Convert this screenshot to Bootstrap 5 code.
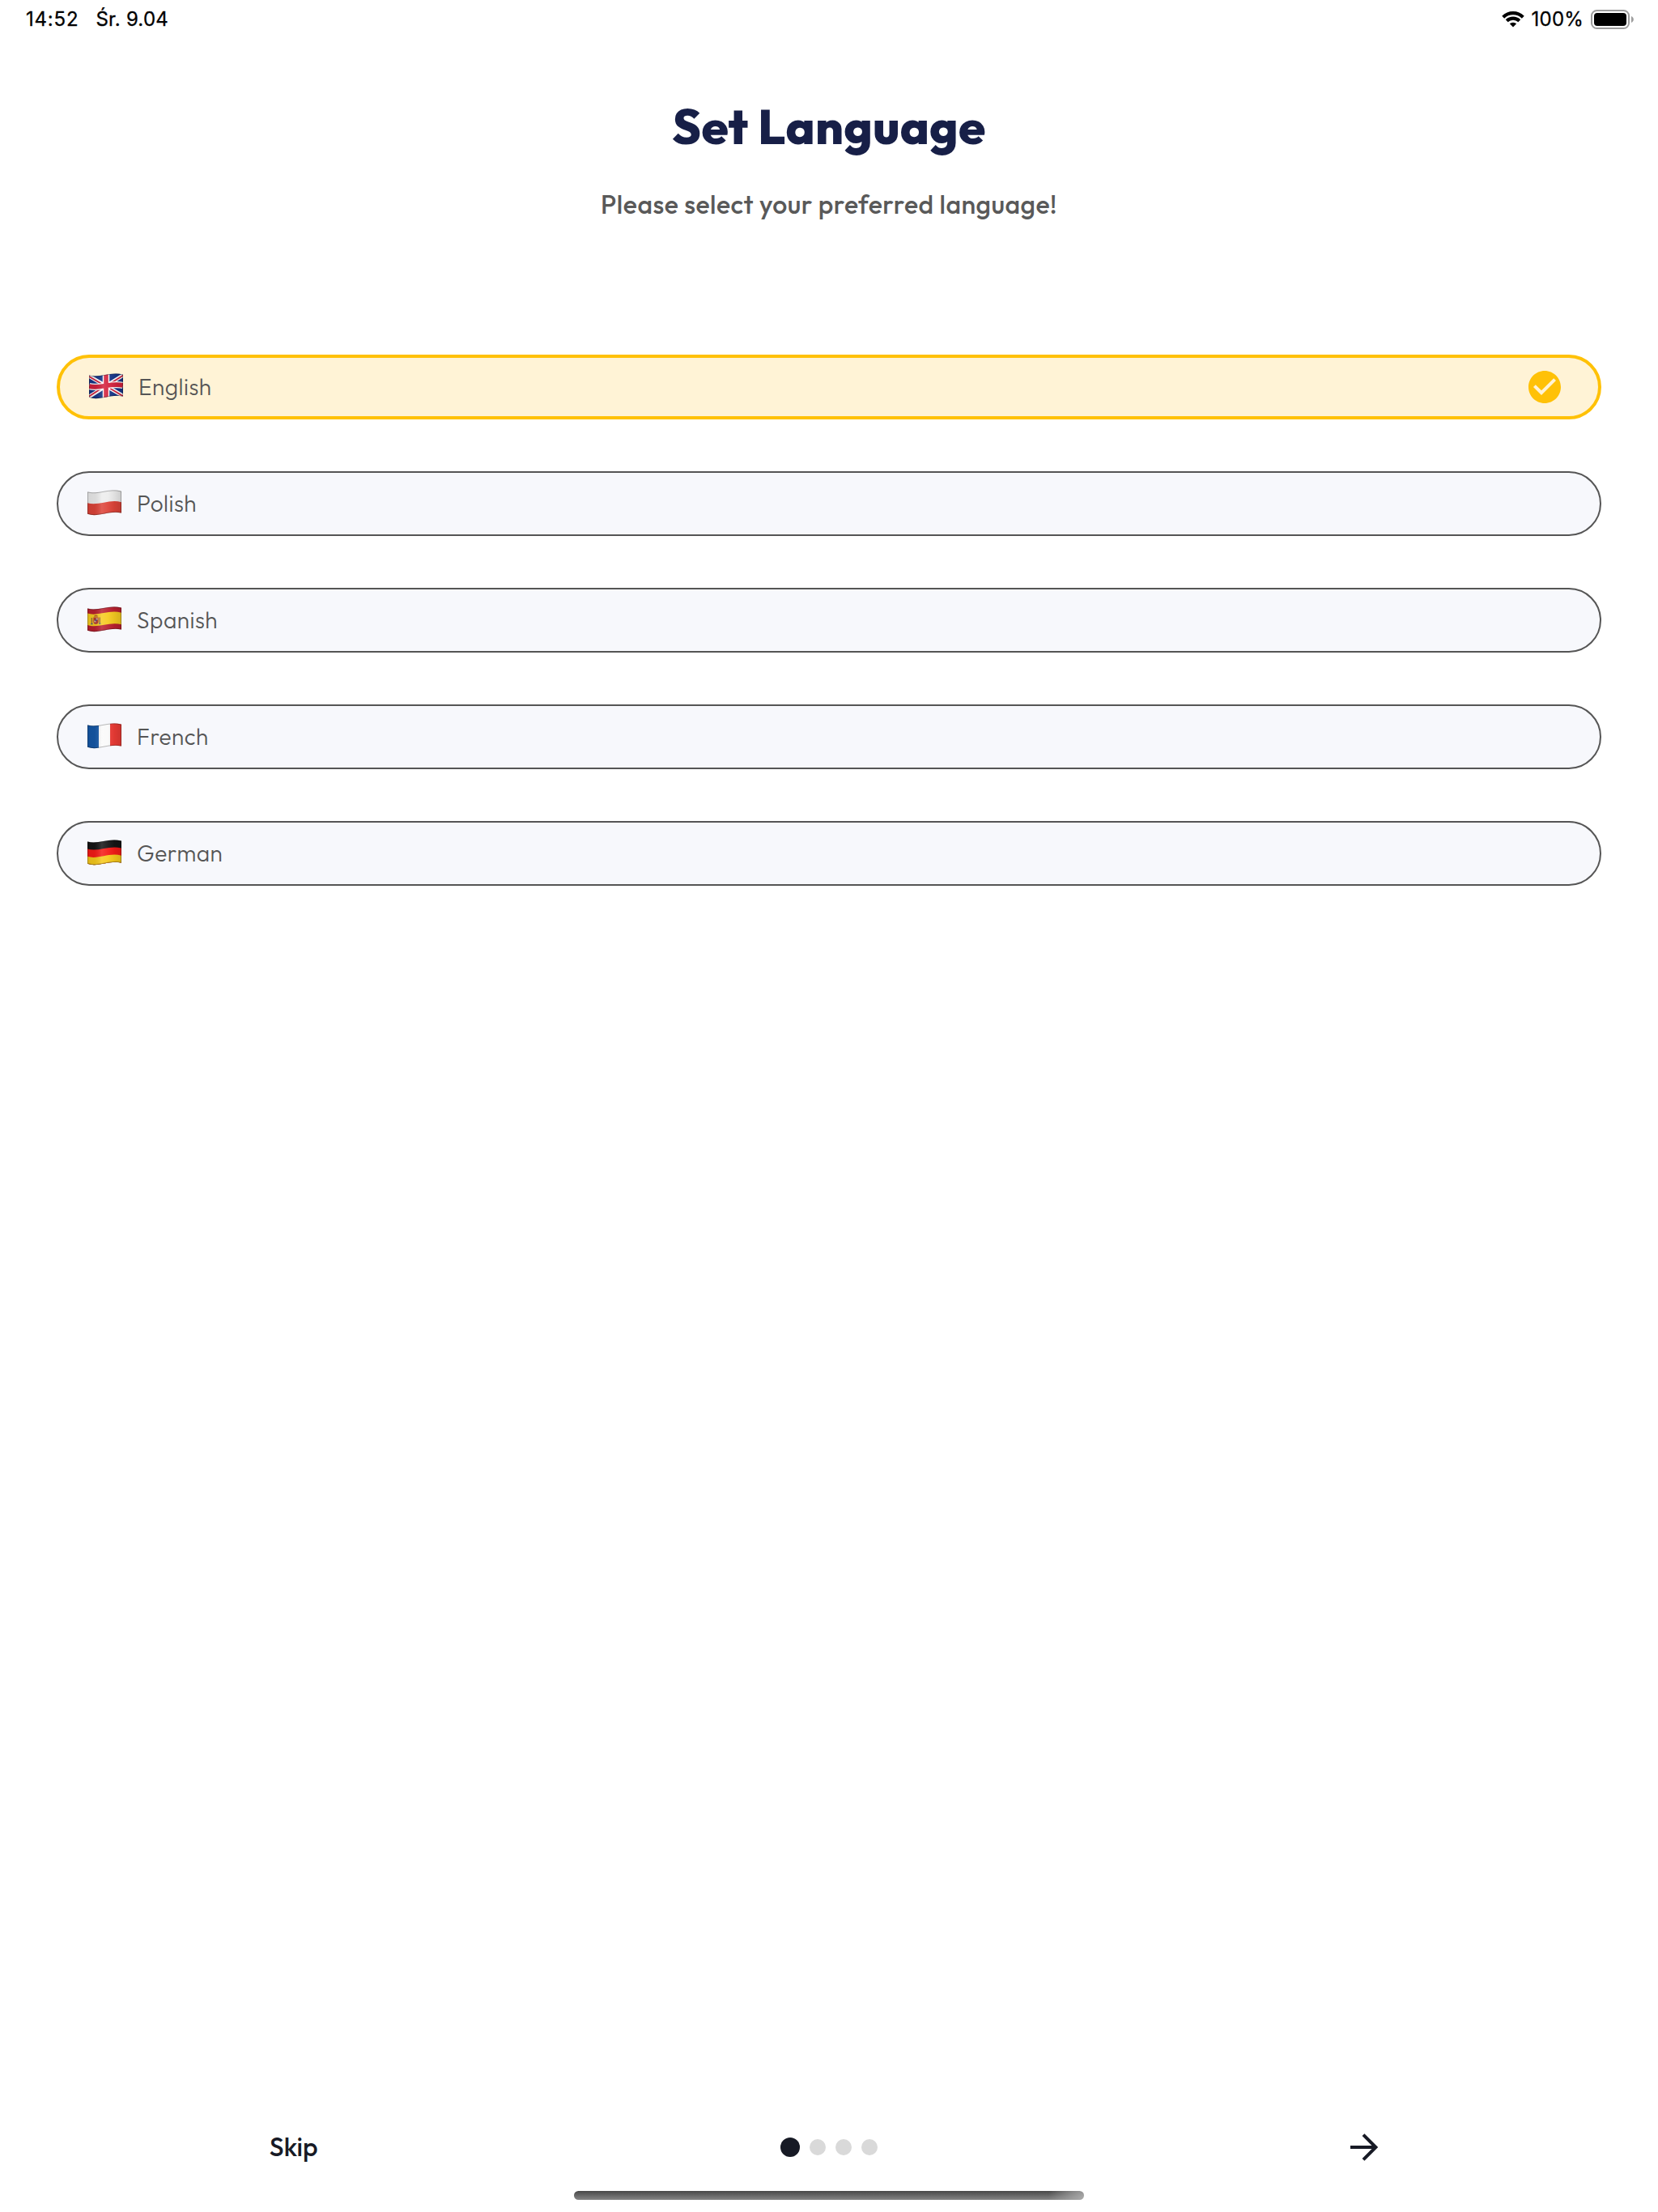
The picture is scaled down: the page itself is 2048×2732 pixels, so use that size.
<!DOCTYPE html>
<html lang="en">
<head>
<meta charset="utf-8">
<meta name="viewport" content="width=device-width, initial-scale=1">
<title>Set Language</title>
<link href="https://cdn.jsdelivr.net/npm/bootstrap@5.3.0/dist/css/bootstrap.min.css" rel="stylesheet">
<style>
body{font-family:Outfit,Lato,sans-serif;color:#555;background:#fff;-webkit-font-smoothing:antialiased}
svg{display:block;flex:none}
.screen{height:2732px;width:2048px;overflow:hidden}
.status{height:48px;padding:0 29px 0 32px;font:400 24px/48px Inter,sans-serif;color:#000;-webkit-text-stroke:.3px #000}
.clock{width:86.5px;letter-spacing:.8px}
.day{letter-spacing:.2px}
.battery-label{margin-left:9px;margin-right:9px;letter-spacing:.2px}
.title{font-size:60px;font-weight:800;line-height:80px;letter-spacing:.45px;color:#171f47;margin-top:68px}
.subtitle{font-size:32px;font-weight:500;line-height:44px;letter-spacing:.5px;margin-top:34px;color:#595959}
.langs{padding:0 70px;margin-top:164px;gap:64px}
.lang{height:80px;border:2px solid #555;border-radius:40px;background:#f7f8fc;padding:0 36px;font-size:28px;font-weight:350;line-height:36px;letter-spacing:.5px}
.lang.chosen{border:4px solid #ffc107;background:#fff3d6;padding-right:42px}
.flag{width:42px;height:34px;margin-right:19px}
.foot{height:96px;margin-bottom:6px;padding:0 32px;color:#171a25;font-size:32px;font-weight:500}
.skip{line-height:46px;padding-bottom:2px}
.dots{gap:12px}
.dot{width:20px;height:20px;border-radius:50%;background:#d9d9d9}
.dot.on{width:24px;height:24px;background:#171a25}
.home-bar{width:630px;height:11px;border-radius:5.5px;margin-bottom:15px;background:radial-gradient(circle at 100% 100%,#aaa 0,#aaa0 44px),linear-gradient(#484848,#858585)}
</style>
</head>
<body>
<svg width="0" height="0" class="position-absolute" aria-hidden="true">
<defs>
<clipPath id="wave"><path d="M0 2.4C13 6.5 27-2.8 42 1.6V28.6C27 25 13 34.5 0 29.8Z"/></clipPath>
<linearGradient id="sheen"><stop offset="0" stop-color="#000" stop-opacity=".1"/><stop offset=".2" stop-color="#000" stop-opacity=".08"/><stop offset=".42" stop-color="#fff" stop-opacity=".14"/><stop offset=".6" stop-color="#fff" stop-opacity=".06"/><stop offset=".8" stop-color="#000" stop-opacity=".06"/><stop offset="1" stop-color="#000" stop-opacity=".14"/></linearGradient>
<g id="finish"><path d="M0 2.4C13 6.5 27-2.8 42 1.6V28.6C27 25 13 34.5 0 29.8Z" fill="url(#sheen)"/><path d="M.4 2.8C13 6.8 27-2.4 41.6 2V28.2C27 24.6 13 34 .4 29.4Z" fill="none" stroke="#000" stroke-opacity=".3" stroke-width=".9"/></g>
</defs>
</svg>
<main class="screen d-flex flex-column">
<header class="status d-flex align-items-center">
<span class="clock">14:52</span><span class="day">Śr. 9.04</span>
<svg class="ms-auto" width="28" height="22" viewBox="0 0 28 22"><g fill="none" stroke="#000" stroke-width="4.1"><path d="M1.7 8.2a17.4 17.4 0 0 1 24.6 0"/><path d="M6.2 12.8a11.2 11.2 0 0 1 15.6 0"/></g><path d="M9.8 16.3a6.2 6.2 0 0 1 8.4 0L14 20.6Z"/></svg>
<span class="battery-label">100%</span>
<svg width="54" height="24" viewBox="0 0 54 24"><rect x="1" y="1" width="46" height="22" rx="6.5" fill="none" stroke="#9d9d9d" stroke-width="2"/><rect x="4" y="4" width="40" height="16" rx="4"/><path d="M50 8c3.8 1.4 3.8 6.6 0 8Z" fill="#9d9d9d"/></svg>
</header>
<h1 class="title text-center mb-0">Set Language</h1>
<p class="subtitle text-center mb-0">Please select your preferred language!</p>
<div class="langs d-flex flex-column">
<div class="lang chosen d-flex align-items-center">
<svg class="flag" viewBox="0 0 42 34"><g clip-path="url(#wave)"><path d="M0 0H42V34H0Z" fill="#163588"/><g fill="none"><path d="M0 3.5 42 28M0 29 42 2.5" stroke="#fff" stroke-width="4.6"/><path d="M0 4 18 14.5M24 17.5 42 28.3M0 28.5 18 17M24 14 42 2.8" stroke="#d3213d" stroke-width="1.8"/><path d="M21 0V34M0 16C13 20 27 11 42 15" stroke="#fff" stroke-width="8.4"/><path d="M21 0V34M0 16C13 20 27 11 42 15" stroke="#d3213d" stroke-width="5.6"/></g></g><use href="#finish"/></svg>
<span>English</span>
<svg class="ms-auto" width="48" height="48" viewBox="0 0 24 24" fill="#ffc107"><path d="M12 2C6.48 2 2 6.48 2 12s4.48 10 10 10 10-4.48 10-10S17.52 2 12 2zm-2 15-5-5 1.41-1.41L10 14.17l7.59-7.59L19 8l-9 9z"/></svg>
</div>
<div class="lang d-flex align-items-center">
<svg class="flag" viewBox="0 0 42 34"><g clip-path="url(#wave)"><path d="M0 0H42V34H0Z" fill="#ededed"/><path d="M0 16.2C13 20.5 27 10.8 42 15.2V34H0Z" fill="#dd4338"/></g><use href="#finish"/></svg>
<span>Polish</span>
</div>
<div class="lang d-flex align-items-center">
<svg class="flag" viewBox="0 0 42 34"><g clip-path="url(#wave)"><path d="M0 0H42V34H0Z" fill="#b9202f"/><path d="M0 8.6C13 12.7 27 3.4 42 7.8V22.2C27 18.2 13 27.5 0 23Z" fill="#f6cb20"/><path d="M7.4 13.5h6.2v5.2a3.1 3.1 0 0 1-6.2 0Z" fill="#b23a32"/><path d="M5.4 14v7M15.2 13.6v7" stroke="#a06a3d" stroke-width="1.5"/><path d="M8 12.6c0-2.4 5-2.4 5 0Z" fill="#b5532d"/><path d="M8.3 17.5h2v2h-2zM10.7 14.4h2v2h-2z" fill="#d9b9a4"/><circle cx="10.5" cy="17" r="1" fill="#35508d"/><path d="M4.2 21.6h2.4M14 21.2h2.4" stroke="#44618e" stroke-width="1.2"/></g><use href="#finish"/></svg>
<span>Spanish</span>
</div>
<div class="lang d-flex align-items-center">
<svg class="flag" viewBox="0 0 42 34"><g clip-path="url(#wave)"><path d="M0 0H14V34H0Z" fill="#1558a8"/><path d="M14 0H28V34H14Z" fill="#fafafa"/><path d="M28 0H42V34H28Z" fill="#ec3b35"/></g><use href="#finish"/></svg>
<span>French</span>
</div>
<div class="lang d-flex align-items-center">
<svg class="flag" viewBox="0 0 42 34"><g clip-path="url(#wave)"><path d="M0 0H42V34H0Z" fill="#151515"/><path d="M0 11.5C13 15.7 27 6.3 42 10.6V34H0Z" fill="#f51a17"/><path d="M0 20.8C13 25 27 15.3 42 19.7V34H0Z" fill="#f6c91c"/></g><use href="#finish"/></svg>
<span>German</span>
</div>
</div>
<footer class="foot mt-auto d-flex align-items-center">
<div class="skip w-100 text-center">Skip</div>
<div class="dots w-100 d-flex justify-content-center align-items-center"><i class="dot on"></i><i class="dot"></i><i class="dot"></i><i class="dot"></i></div>
<div class="w-100 d-flex justify-content-center"><svg width="48" height="48" viewBox="0 0 48 48" fill="none" stroke="#171a25" stroke-width="4"><path d="M7 24H39M23 8.6 38.4 24 23 39.4"/></svg></div>
</footer>
<div class="home-bar align-self-center"></div>
</main>
<script src="https://cdn.jsdelivr.net/npm/bootstrap@5.3.0/dist/js/bootstrap.bundle.min.js"></script>
</body>
</html>
